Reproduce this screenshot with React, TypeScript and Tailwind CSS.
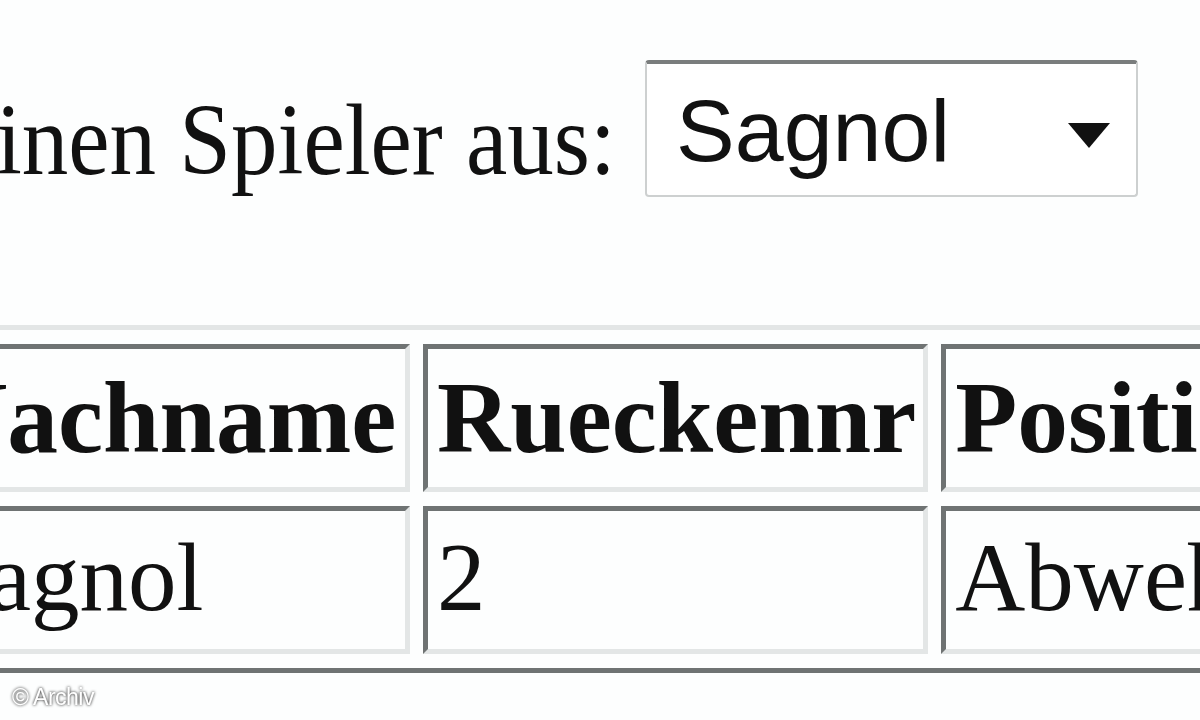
import React from "react";

export default function App() {
  const dark = "#6f7373";
  const light = "#e3e6e6";
  const cellStyle = { borderTopColor: dark, borderLeftColor: dark, borderBottomColor: light, borderRightColor: light };
  return (
    <div className="relative w-[1200px] h-[720px] overflow-hidden bg-[#fdfefe] text-[#111]">
      <div className="flex items-start pt-[60px]">
        <div className="ml-[-4px] w-[649px] shrink-0 mt-[35px]">
          <div className="inline-block origin-bottom scale-y-[1.1] whitespace-nowrap text-[93px] leading-[100px] [font-family:'Liberation_Serif','Times_New_Roman',serif]">
            inen Spieler aus:
          </div>
        </div>
        <div className="flex items-start w-[493px] h-[137px] rounded-[4px] border-[2px] border-t-[4px] border-[#cdd0d0] border-t-[#7a7d7d] bg-white pl-[29px] pr-[26px] pt-[17px] shrink-0">
          <span className="flex-1 text-[88px] leading-[100px] [font-family:'Liberation_Sans',Arial,sans-serif]">
            Sagnol
          </span>
          <svg width="42" height="25" viewBox="0 0 42 25" className="mt-[42px]">
            <polygon points="0,0 42,0 21,25" fill="#111" />
          </svg>
        </div>
      </div>

      <div className="mt-[128px] w-[2000px]">
        <table
          className="ml-[-104px] border-separate border-spacing-x-[13px] border-spacing-y-[14px] border-[5px] [font-family:'Liberation_Serif','Times_New_Roman',serif]"
          style={{ borderTopColor: light, borderLeftColor: light, borderBottomColor: dark, borderRightColor: dark }}
        >
          <thead>
            <tr>
              {[
                ["Nachname", "w-[496px] pl-[15px] pr-[1px]"],
                ["Rueckennr", "w-[504px] pl-[9px] pr-[7px]"],
                ["Position", "w-[500px] pl-[9px] pr-[7px]"],
              ].map(([t, w]) => (
                <th
                  key={t}
                  className={`${w} h-[148px] border-[5px] py-0 text-left align-middle font-bold text-[101.5px] leading-[110px] whitespace-nowrap`}
                  style={cellStyle}
                >
                  {t}
                </th>
              ))}
            </tr>
          </thead>
          <tbody>
            <tr>
              {[
                ["Sagnol", "pl-[15px] pr-[1px]"],
                ["2", "pl-[9px] pr-[7px]"],
                ["Abwehr", "pl-[9px] pr-[7px]"],
              ].map(([t, p]) => (
                <td
                  key={t}
                  className={`${p} h-[148px] border-[5px] pt-0 pb-[5px] text-left align-middle text-[97px] leading-[110px] whitespace-nowrap`}
                  style={cellStyle}
                >
                  {t}
                </td>
              ))}
            </tr>
          </tbody>
        </table>
      </div>

      <div className="absolute left-[12px] top-[683px] text-[23px] leading-[28px] tracking-[-0.5px] text-white [font-family:'Liberation_Sans',Arial,sans-serif] drop-shadow-[0_0_1.5px_rgba(0,0,0,0.95)]">
        © Archiv
      </div>
    </div>
  );
}
